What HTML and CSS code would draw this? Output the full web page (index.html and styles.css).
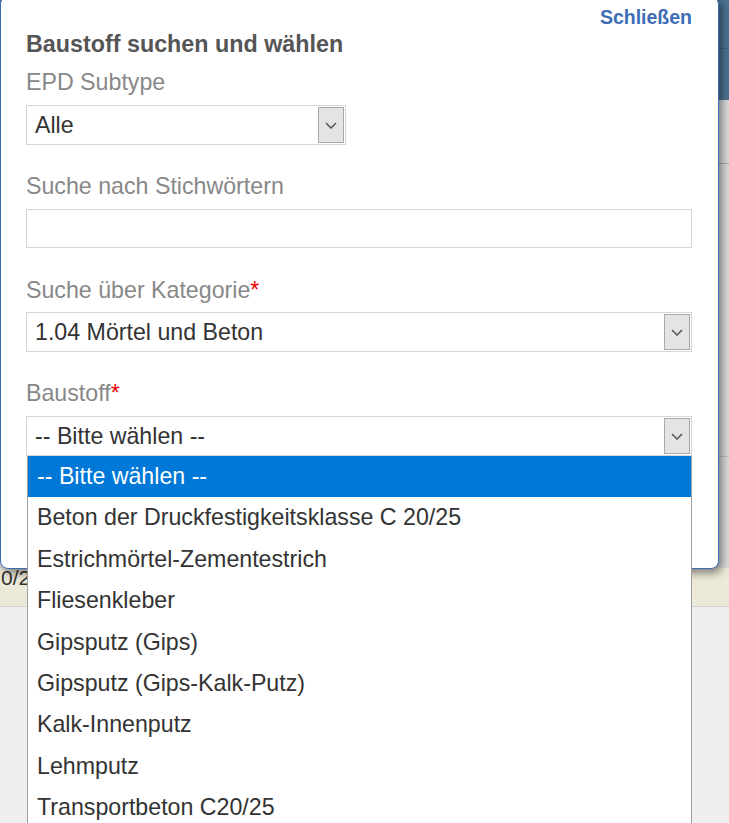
FILE: index.html
```html
<!DOCTYPE html>
<html lang="de">
<head>
<meta charset="utf-8">
<title>Baustoff suchen und wählen</title>
<link rel="stylesheet" href="styles.css">
</head>
<body>
<div class="page">
  <div class="topbar"><div class="topbar-row"></div></div>
  <div class="content">
    <div class="row row-a"></div>
    <div class="row row-b"></div>
  </div>
  <div class="band"><span class="band-text">0/25</span></div>
  <div class="rest"></div>
</div>

<div class="modal">
  <div class="close-row"><a class="close" href="#">Schließen</a></div>
  <h2 class="title">Baustoff suchen und wählen</h2>

  <div class="label l-first">EPD Subtype</div>
  <div class="select select-small">
    <span class="select-text">Alle</span>
    <span class="arrow"><svg width="12" height="7" viewBox="0 0 12 7"><polyline points="1,1 6,6 11,1" fill="none" stroke="#555" stroke-width="1.5"/></svg></span>
  </div>

  <div class="label l-gap">Suche nach Stichwörtern</div>
  <div class="input"></div>

  <div class="label l-gap2">Suche über Kategorie<span class="req">*</span></div>
  <div class="select select-wide">
    <span class="select-text">1.04 Mörtel und Beton</span>
    <span class="arrow"><svg width="12" height="7" viewBox="0 0 12 7"><polyline points="1,1 6,6 11,1" fill="none" stroke="#555" stroke-width="1.5"/></svg></span>
  </div>

  <div class="label l-gap">Baustoff<span class="req">*</span></div>
  <div class="select select-wide">
    <span class="select-text">-- Bitte wählen --</span>
    <span class="arrow"><svg width="12" height="7" viewBox="0 0 12 7"><polyline points="1,1 6,6 11,1" fill="none" stroke="#555" stroke-width="1.5"/></svg></span>
  </div>
</div>

<ul class="listbox">
  <li class="opt selected">-- Bitte wählen --</li>
  <li class="opt">Beton der Druckfestigkeitsklasse C 20/25</li>
  <li class="opt">Estrichmörtel-Zementestrich</li>
  <li class="opt">Fliesenkleber</li>
  <li class="opt">Gipsputz (Gips)</li>
  <li class="opt">Gipsputz (Gips-Kalk-Putz)</li>
  <li class="opt">Kalk-Innenputz</li>
  <li class="opt">Lehmputz</li>
  <li class="opt">Transportbeton C20/25</li>
</ul>
</body>
</html>
```

FILE: styles.css
```css
html, body {
  margin: 0;
  padding: 0;
}
body {
  width: 729px;
  height: 823px;
  overflow: hidden;
  position: relative;
  background: #efefef;
  font-family: "Liberation Sans", Arial, sans-serif;
}

/* background page */
.page {
  display: flex;
  flex-direction: column;
}
.topbar {
  height: 100px;
  background: #4b7393;
}
.topbar-row {
  height: 48px;
  border-bottom: 1px solid #3d6582;
}
.content {
  height: 468px;
  background: #dadada;
}
.row-a {
  height: 63px;
  border-bottom: 1px solid #a9a9a9;
}
.row-b {
  height: 292px;
  border-bottom: 1px solid #bdbdbd;
}
.band {
  height: 38px;
  background: #ece9d8;
  border-bottom: 1px solid #d2d2d2;
}
.band-text {
  display: block;
  padding-left: 1px;
  line-height: 20px;
  font-size: 21px;
  color: #333;
}
.rest {
  flex: 1;
}

/* modal */
.modal {
  position: absolute;
  left: 0;
  top: -4px;
  box-sizing: border-box;
  width: 719px;
  height: 573px;
  background: #fff;
  border: 1px solid #3b6cb4;
  border-radius: 8px;
  box-shadow: 3px 4px 9px rgba(0, 0, 0, 0.45);
  padding: 9px 26px 0 25px;
}
.close-row {
  height: 23px;
  line-height: 23px;
  text-align: right;
}
.close {
  font-size: 19.5px;
  font-weight: bold;
  color: #3d6db5;
  text-decoration: none;
}
.title {
  margin: 0;
  font-size: 23.3px;
  line-height: 30px;
  font-weight: bold;
  color: #555;
}
.label {
  font-size: 23.2px;
  line-height: 30px;
  color: #888;
  margin-top: 26px;
  margin-bottom: 8px;
}
.label.l-first {
  margin-top: 8px;
}
.label.l-gap2 {
  margin-top: 27px;
  margin-bottom: 7px;
}
.req {
  color: #e00;
}

.select {
  box-sizing: border-box;
  height: 40px;
  border: 1px solid #d6d6d6;
  display: flex;
  align-items: center;
  background: #fff;
}
.select-small {
  width: 320px;
}
.select-wide {
  width: 666px;
}
.select-text {
  flex: 1;
  padding-left: 8px;
  font-size: 23.2px;
  color: #333;
  white-space: nowrap;
}
.arrow {
  box-sizing: border-box;
  width: 26px;
  height: 36px;
  margin-right: 1px;
  background: #e4e4e4;
  border: 1px solid #a8a8a8;
  display: flex;
  align-items: center;
  justify-content: center;
}
.input {
  box-sizing: border-box;
  width: 666px;
  height: 39px;
  border: 1px solid #d6d6d6;
}

/* open dropdown */
.listbox {
  position: absolute;
  left: 27px;
  top: 456px;
  box-sizing: border-box;
  width: 665px;
  height: 380px;
  margin: 0;
  padding: 0;
  list-style: none;
  background: #fff;
  border-left: 1px solid #a0a0a0;
  border-right: 1px solid #a0a0a0;
}
.opt {
  height: 41.4px;
  line-height: 41.4px;
  padding-left: 9px;
  font-size: 23.2px;
  color: #333;
  white-space: nowrap;
}
.opt.selected {
  background: #0078d7;
  color: #fff;
}
```
